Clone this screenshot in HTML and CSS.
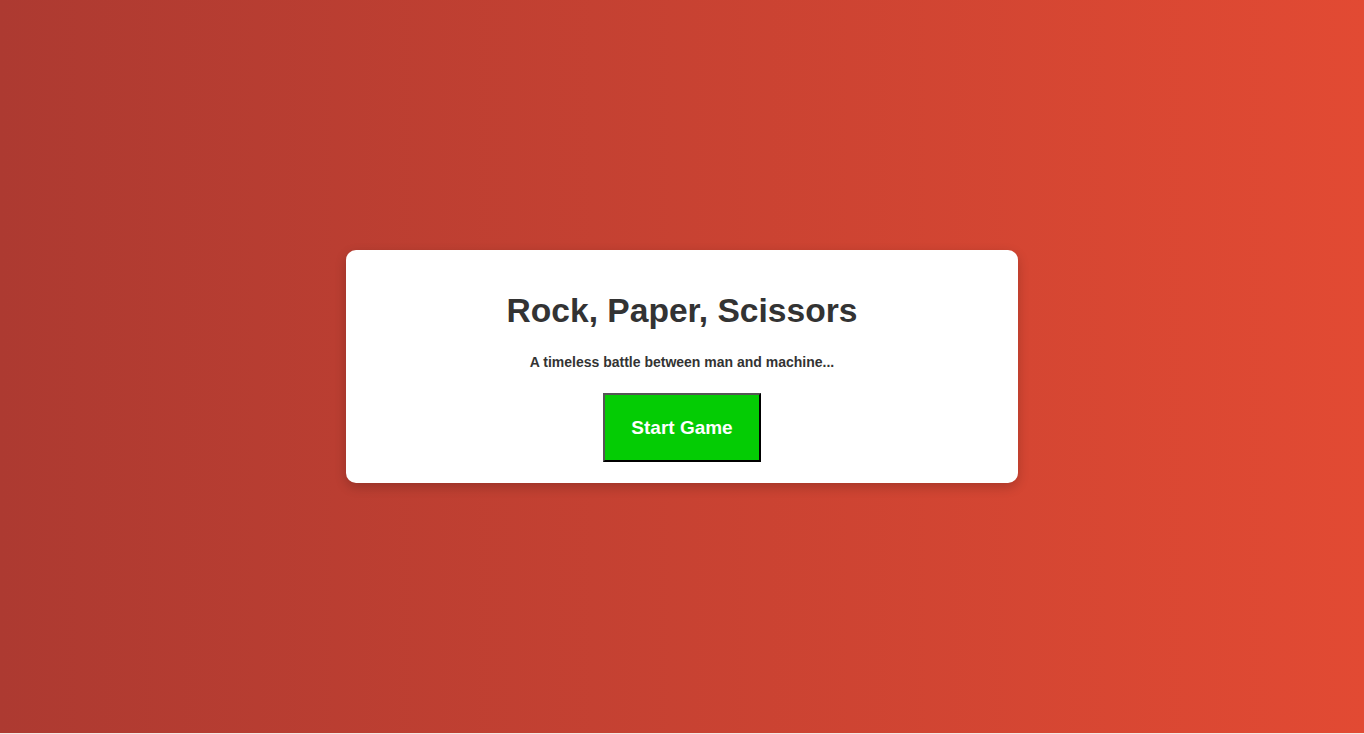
FILE: index.html
```html
<!DOCTYPE html>
<html lang="en">
<head>
<meta charset="utf-8">
<title>Rock, Paper, Scissors</title>
<link rel="stylesheet" href="styles.css">
</head>
<body>
<main class="page">
  <section class="card">
    <h1 class="title">Rock, Paper, Scissors</h1>
    <p class="subtitle">A timeless battle between man and machine...</p>
    <button class="start-btn" type="button">Start Game</button>
  </section>
</main>
</body>
</html>
```
FILE: styles.css
```css
html, body {
  margin: 0;
  padding: 0;
  background: #f4e8e4;
}
body {
  font-family: "Liberation Sans", Arial, sans-serif;
}
.page {
  height: 733px;
  display: flex;
  align-items: center;
  justify-content: center;
  background: linear-gradient(to right, #ad3a31, #e24a33);
}
.card {
  width: 672px;
  box-sizing: border-box;
  background: #fff;
  border-radius: 10px;
  padding: 22px 20px 21px;
  text-align: center;
  box-shadow: 0 4px 12px rgba(0, 0, 0, 0.2);
  color: #333;
}
.title {
  font-size: 33.6px;
  font-weight: bold;
  margin: 20px 0 24px;
}
.subtitle {
  font-size: 14px;
  font-weight: bold;
  margin: 0 0 23px;
}
.start-btn {
  font-family: "Liberation Sans", Arial, sans-serif;
  font-size: 19px;
  font-weight: bold;
  color: #fff;
  background: #04cc04;
  border: 2px outset #555;
  border-right-color: #000;
  border-bottom-color: #000;
  padding: 22px 26px 21px;
  cursor: pointer;
}
```
